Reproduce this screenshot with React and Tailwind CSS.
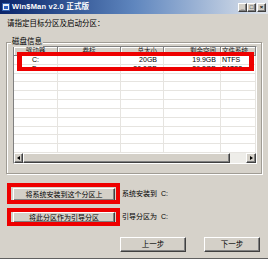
import React from 'react';

const cols = [
  { label: '驱动器', w: 'w-[44px]', align: 'justify-center' },
  { label: '卷标', w: 'w-[63px]', align: 'justify-center' },
  { label: '总大小', w: 'w-[43px]', align: 'justify-end pr-[6px]' },
  { label: '剩余空间', w: 'w-[57px]', align: 'justify-end pr-[4px]' },
  { label: '文件系统', w: 'w-[35px]', align: 'justify-start pl-[1px]' },
];

const rows = [
  ['C:', '', '20GB', '19.9GB', 'NTFS'],
  ['D:', '', '30.0GB', '29.8GB', 'FAT32'],
  ['', '', '', '', ''],
  ['', '', '', '', ''],
  ['', '', '', '', ''],
  ['', '', '', '', ''],
  ['', '', '', '', ''],
  ['', '', '', '', ''],
  ['', '', '', '', ''],
  ['', '', '', '', ''],
  ['', '', '', '', ''],
];

// raised win2k style edge
const raised = 'border border-t-white border-l-white border-r-[#404040] border-b-[#404040] shadow-[inset_-1px_-1px_0_#808080]';

const TitleButton = ({ children }) => (
  <div className={`w-[9px] h-[9px] bg-[#d4d0c8] ${raised} flex items-center justify-center text-[6px] leading-none font-bold text-black`}>
    {children}
  </div>
);

const App = () => {
  return (
    <div className="w-[268px] h-[259px] bg-[#d6d2ca] flex flex-col relative overflow-hidden text-black text-[7.5px] font-['Liberation_Sans','Noto_Sans_CJK_SC',sans-serif]">
      {/* Title bar */}
      <div className="h-[14px] shrink-0 flex items-center bg-gradient-to-r from-[#0a246a] via-[#5f86be] to-[#e2e6ec] pl-[2px] pr-[2px]">
        <div className="w-[8px] h-[8px] bg-[#e8eef8] border border-[#3060b0] mr-[2px] flex items-center justify-center">
          <div className="w-[4px] h-[3px] bg-[#2b5fc0]" />
        </div>
        <span className="text-white font-bold text-[7.5px] leading-none tracking-[0.2px]">Win$Man v2.0 正式版</span>
        <div className="flex-1" />
        <div className="flex items-center gap-[0px] mr-[0px]">
          <TitleButton>_</TitleButton>
          <TitleButton>□</TitleButton>
          <div className="ml-[1px]"><TitleButton>×</TitleButton></div>
        </div>
      </div>

      {/* Instruction */}
      <div className="pt-[4px] pl-[7px] leading-[12px] h-[16px]">请指定目标分区及启动分区：</div>

      {/* Group box */}
      <div className="mt-[12px] ml-[6px] w-[256px] h-[132px] relative border border-[#a09c94] shadow-[inset_1px_1px_0_#ffffff,1px_1px_0_#ffffff] pt-[3px] pl-[6px]">
        <div className="absolute -top-[6px] left-[4px] px-[1px] bg-[#d6d2ca] leading-[10px]">磁盘信息</div>

        {/* List view */}
        <div className="w-[244px] h-[118px] border border-t-[#808080] border-l-[#808080] border-r-white border-b-white bg-white flex flex-col overflow-hidden">
          <div className="h-[9px] shrink-0 flex bg-[#d4d0c8]">
            {cols.map((c) => (
              <div
                key={c.label}
                className={`${c.w} h-full flex items-center ${c.align} border-r border-r-[#808080] border-b border-b-[#808080] shadow-[inset_1px_1px_0_#ffffff] text-[6.5px] leading-none text-[#222]`}
              >
                {c.label}
              </div>
            ))}
          </div>
          <div className="flex-1 flex flex-col">
            {rows.map((r, i) => (
              <div key={i} className="flex-1 flex">
                {r.map((v, j) => (
                  <div
                    key={j}
                    className={`${cols[j].w} flex items-center ${cols[j].align} border-r border-b border-[#e6e4e0] text-[7px] leading-none`}
                  >
                    {v}
                  </div>
                ))}
              </div>
            ))}
          </div>
          {/* Horizontal scrollbar */}
          <div className="h-[10px] shrink-0 flex bg-[#eeede9]">
            <div className={`w-[9px] h-full bg-[#d4d0c8] ${raised} flex items-center justify-center`}>
              <div className="w-0 h-0 border-y-[2.5px] border-y-transparent border-r-[3px] border-r-black" />
            </div>
            <div className={`w-[207px] h-full bg-[#d4d0c8] ${raised}`} />
            <div className="flex-1" />
            <div className={`w-[10px] h-full bg-[#d4d0c8] ${raised} flex items-center justify-center`}>
              <div className="w-0 h-0 border-y-[2.5px] border-y-transparent border-l-[3px] border-l-black" />
            </div>
          </div>
        </div>
      </div>

      {/* Install / boot rows */}
      <div className="mt-[14px] ml-[13px] flex items-center h-[13px]">
        <button className={`w-[102px] h-full bg-[#d4d0c8] ${raised} text-[7px] leading-none`}>将系统安装到这个分区上</button>
        <span className="ml-[7px] text-[7px]">系统安装到&nbsp;&nbsp;C:</span>
      </div>
      <div className="mt-[11px] ml-[13px] flex items-center h-[11px]">
        <button className={`w-[102px] h-full bg-[#d4d0c8] ${raised} text-[7px] leading-none`}>将此分区作为引导分区</button>
        <span className="ml-[7px] text-[7px]">引导分区为&nbsp;&nbsp;C:</span>
      </div>

      {/* Navigation buttons */}
      <div className="mt-[14px] flex items-center h-[15px]">
        <div className="w-[120px]" />
        <button className={`w-[66px] h-full bg-[#d4d0c8] ${raised} text-[7.5px] leading-none`}>上一步</button>
        <div className="w-[18px]" />
        <button className={`w-[56px] h-full bg-[#d4d0c8] ${raised} text-[7.5px] leading-none`}>下一步</button>
      </div>

      <div className="flex-1" />
      <div className="h-[1px] bg-[#606060] shrink-0" />

      {/* Red highlight frames drawn over the screenshot */}
      <div className="absolute left-[17px] top-[52px] w-[237px] h-[19px] border-x-[5px] border-y-[4px] border-[#ee0000]" />
      <div className="absolute left-[7px] top-[183px] w-[113px] h-[21px] border-[4px] border-[#ee0000]" />
      <div className="absolute left-[7px] top-[208px] w-[113px] h-[18px] border-[4px] border-[#ee0000]" />
    </div>
  );
};

export default App;
